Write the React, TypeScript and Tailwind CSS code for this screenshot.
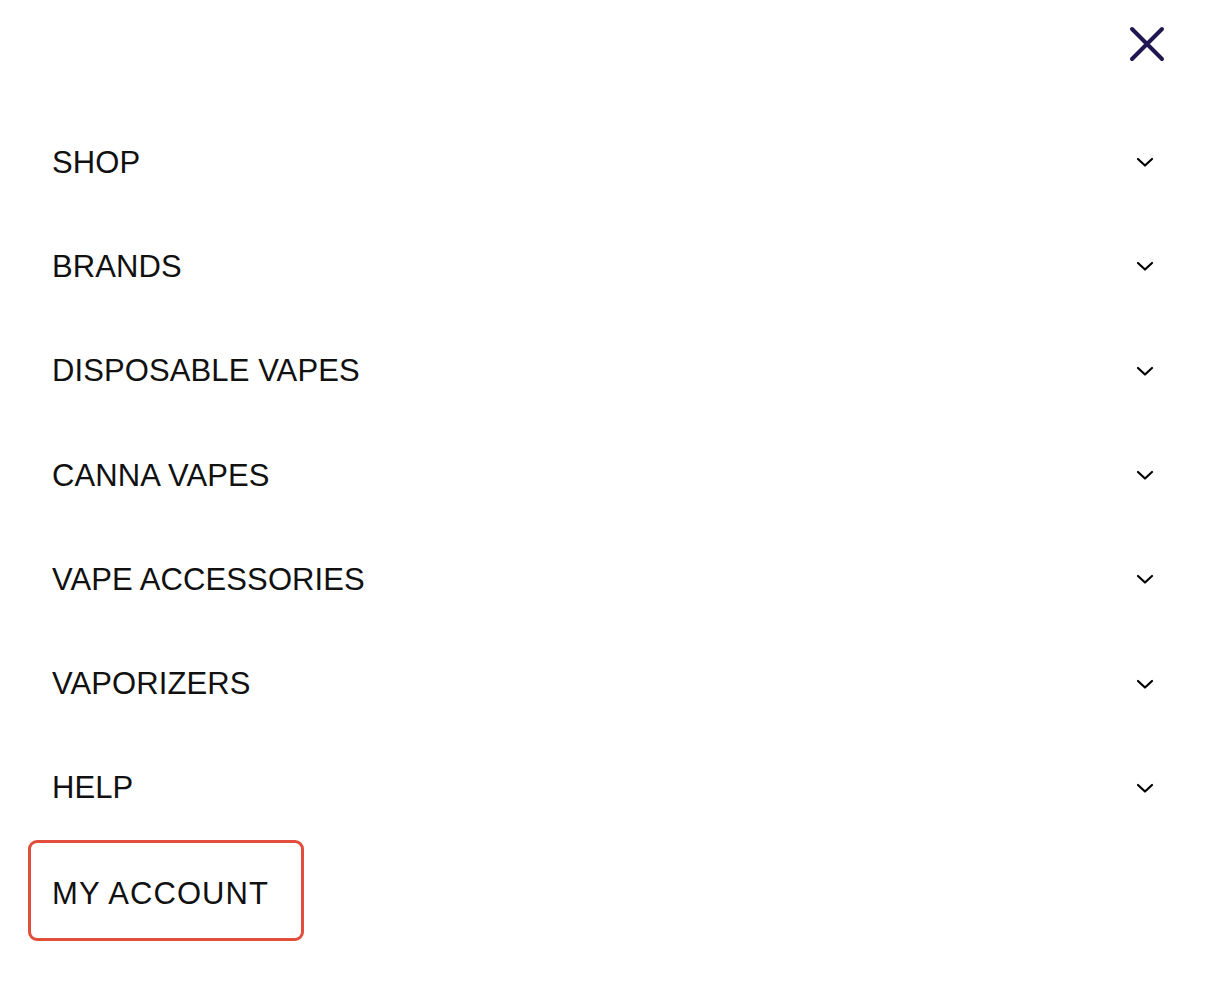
import React from 'react';

const items = [
  'SHOP',
  'BRANDS',
  'DISPOSABLE VAPES',
  'CANNA VAPES',
  'VAPE ACCESSORIES',
  'VAPORIZERS',
  'HELP',
];

const Chevron: React.FC = () => (
  <svg width="20" height="12" viewBox="0 0 20 12" fill="none" className="text-black">
    <path d="M3 3 L10 9.5 L17 3" stroke="currentColor" strokeWidth="2.2" strokeLinecap="round" strokeLinejoin="round" />
  </svg>
);

const App: React.FC = () => {
  return (
    <div className="w-[1211px] h-[993px] bg-white font-['Liberation_Sans',Arial,sans-serif] text-[#111]">
      <div className="flex justify-end pt-[26px] pr-[46px] h-[110px]">
        <button className="w-[36px] h-[36px] flex items-center justify-center" aria-label="Close">
          <svg width="36" height="36" viewBox="0 0 36 36" fill="none">
            <path d="M3 3 L33 33 M33 3 L3 33" stroke="#1f1652" strokeWidth="4" strokeLinecap="round" />
          </svg>
        </button>
      </div>
      <nav className="ml-[28px] mr-[56px]">
        <ul>
          {items.map((label) => (
            <li key={label} className="h-[104.3px] flex items-center justify-between pl-[24px]">
              <span className="text-[31px] leading-none tracking-[0.1px]">{label}</span>
              <Chevron />
            </li>
          ))}
          <li className="flex">
            <a className="h-[101px] w-[276px] flex items-center pl-[21px] pt-[5px] border-[3px] border-[#e14f3c] rounded-[9px] text-[31px] leading-none tracking-[1.1px]">
              MY ACCOUNT
            </a>
          </li>
        </ul>
      </nav>
    </div>
  );
};

export default App;
